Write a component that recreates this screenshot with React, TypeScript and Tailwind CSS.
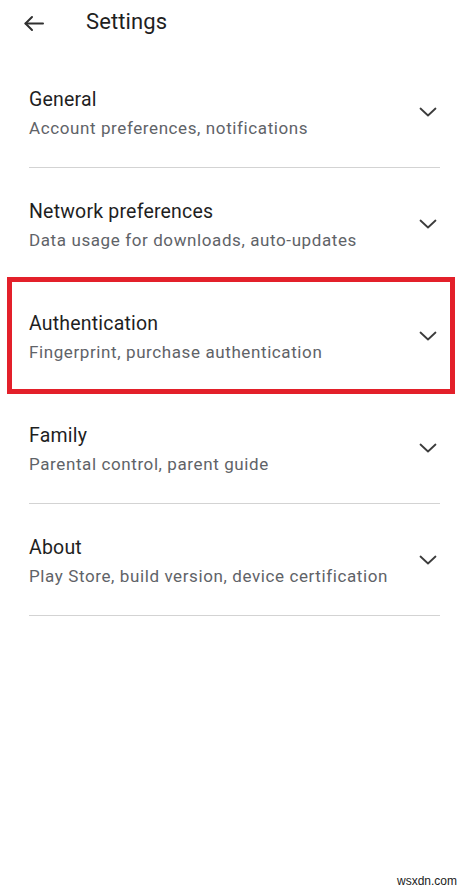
import React from 'react';

const ITEMS = [
  { title: 'General', subtitle: 'Account preferences, notifications' },
  { title: 'Network preferences', subtitle: 'Data usage for downloads, auto-updates' },
  { title: 'Authentication', subtitle: 'Fingerprint, purchase authentication', highlight: true },
  { title: 'Family', subtitle: 'Parental control, parent guide' },
  { title: 'About', subtitle: 'Play Store, build version, device certification' },
];

function BackArrow() {
  return (
    <svg width="21" height="17" viewBox="0 0 21 17" fill="none" stroke="#303030" strokeWidth="2" strokeLinecap="round" strokeLinejoin="round">
      <path d="M20 8.5H2.5" />
      <path d="M9 2L2.5 8.5L9 15" />
    </svg>
  );
}

function Chevron() {
  return (
    <svg width="18" height="10" viewBox="0 0 18 10" fill="none" stroke="#3c3c3c" strokeWidth="1.8" strokeLinecap="round" strokeLinejoin="round">
      <path d="M1.5 1.5L9 8.5L16.5 1.5" />
    </svg>
  );
}

export default function App() {
  return (
    <div className="relative w-[469px] h-[893px] bg-white overflow-hidden font-['Roboto','Noto_Sans',sans-serif]">
      {/* Top bar */}
      <div className="h-[56px] flex items-start pt-[8px] pl-[23px]">
        <div className="h-[28px] flex items-center mt-[1px]">
          <BackArrow />
        </div>
        <h1 className="ml-[42px] text-[22px] leading-[28px] text-[#1f1f1f] tracking-[0.1px]">Settings</h1>
      </div>

      {/* Settings list */}
      <div className="px-[29px]">
        {ITEMS.map((item) => (
          <div key={item.title} className="relative border-b border-[#d3d3d3]">
            <div className="flex items-center justify-between pt-[32px] pb-[27px]">
              <div className="flex flex-col gap-[4px]">
                <span className="text-[19.5px] leading-[24px] text-[#1f1f1f] tracking-[0.2px]">{item.title}</span>
                <span className="text-[17px] leading-[24px] text-[#5f6368] tracking-[0.6px]">{item.subtitle}</span>
              </div>
              <div className="mr-[3px] -mt-[4px]">
                <Chevron />
              </div>
            </div>
            {item.highlight && (
              <div className="absolute -left-[22px] -right-[15px] -top-[3px] -bottom-[3px] border-[5px] border-[#e3202a] pointer-events-none" />
            )}
          </div>
        ))}
      </div>

      <span className="absolute right-[12px] bottom-[5px] text-[12px] leading-[14px] text-[#222] font-['Liberation_Sans',sans-serif]">
        wsxdn.com
      </span>
    </div>
  );
}
